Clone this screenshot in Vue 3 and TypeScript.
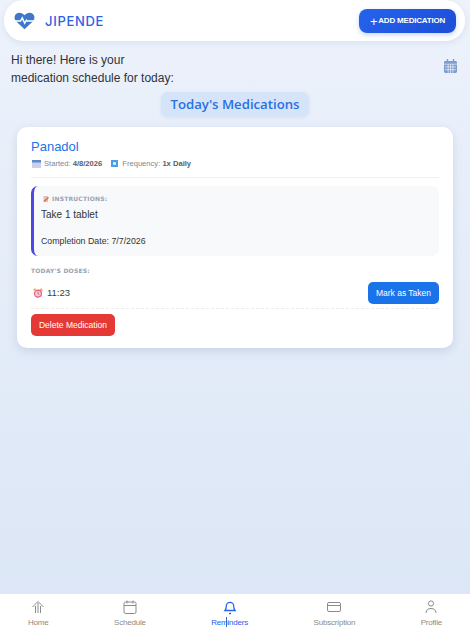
<script setup lang="ts">
interface NavItem { label: string; active?: boolean; icon: string }
const nav: NavItem[] = [
  { label: 'Home', icon: 'home' },
  { label: 'Schedule', icon: 'cal' },
  { label: 'Reminders', icon: 'bell', active: true },
  { label: 'Subscription', icon: 'card' },
  { label: 'Profile', icon: 'user' },
]
</script>

<template>
  <div class="page">
    <header class="topbar">
      <div class="brand">
        <svg class="logo" viewBox="0 0 24 20" width="21" height="18">
          <path fill="#3f78c9" d="M12 19.500 2.600 10.600C-.2 7.800.1 3.600 2.700 1.600 5.400-.4 9.500.2 12 3.300 14.500.2 18.600-.4 21.300 1.600c2.600 2 2.900 6.200.1 9z"/>
          <path fill="none" stroke="#fff" stroke-width="1.700" d="M1 10h6.500l2-3.500 2.700 6 2-3.500 1 1H23"/>
        </svg>
        <span class="brand-name">JIPENDE</span>
      </div>
      <button class="add-btn"><span class="plus">+</span>ADD MEDICATION</button>
    </header>

    <div class="greeting-row">
      <p class="greeting">Hi there! Here is your<br />medication schedule for today:</p>
      <svg class="cal-icon" viewBox="0 0 14 15" width="13" height="14">
        <path fill="#7c9bd1" d="M3 0h1.500v2h5V0H11v2h1.500A1.500 1.500 0 0 1 14 3.500V13.500A1.500 1.500 0 0 1 12.500 15h-11A1.500 1.500 0 0 1 0 13.500V3.500A1.500 1.500 0 0 1 1.500 2H3z"/>
        <path fill="none" stroke="#e8effa" stroke-width=".8" d="M0 5.500h14M1 8.500h12M1 11.500h12M4.500 5.500V15M7 5.500V15M9.500 5.500V15"/>
      </svg>
    </div>

    <div class="title-row"><h2 class="title">Today's Medications</h2></div>

    <section class="card">
      <h3 class="med-name">Panadol</h3>
      <div class="meta">
        <span class="meta-item">
          <svg class="mini" viewBox="0 0 9 8" width="9" height="8"><rect width="9" height="8" fill="#cfcdec"/><rect width="9" height="2.500" fill="#5a8ccc"/></svg>Started: <b>4/8/2026</b>
        </span>
        <span class="meta-item">
          <svg class="mini freq" viewBox="0 0 7 7" width="7" height="7"><rect width="7" height="7" fill="#4a9be8"/><rect x="2" y="2" width="3" height="3" fill="#cfe6fb"/></svg>Frequency: <b>1x Daily</b>
        </span>
      </div>
      <div class="instructions">
        <div class="label">
          <svg class="note" viewBox="0 0 6 6" width="6" height="6"><rect x=".5" width="4.500" height="6" fill="#d9c3c0"/><path d="M1 5.500 5.500 1.500" stroke="#e8663c" stroke-width="1.300"/></svg>INSTRUCTIONS:
        </div>
        <p class="take">Take 1 tablet</p>
        <p class="completion">Completion Date: 7/7/2026</p>
      </div>
      <div class="doses-label">TODAY'S DOSES:</div>
      <div class="dose">
        <span class="dose-time">
          <svg class="alarm" viewBox="0 0 10 10" width="10" height="10">
            <circle cx="5" cy="5.600" r="3.500" fill="#f6c9d6" stroke="#e8557a" stroke-width="1.100"/>
            <path d="M5 3.800v2l1.300.7" fill="none" stroke="#b8475f" stroke-width=".7"/>
            <path d="M.6 2.600 2.600.8M9.400 2.600 7.400.8" stroke="#e9a23a" stroke-width="1.400"/>
          </svg>11:23
        </span>
        <button class="taken-btn">Mark as Taken</button>
      </div>
      <button class="delete-btn">Delete Medication</button>
    </section>

    <nav class="bottom-nav">
      <div v-for="item in nav" :key="item.label" class="nav-item" :class="{ active: item.active }">
        <svg viewBox="0 0 16 16" width="16" height="16" fill="none" stroke="currentColor" stroke-width="1">
          <template v-if="item.icon === 'home'">
            <path d="M2.500 8 8 2.500 13.500 8M5.500 7V14M10.500 7V14M8 4v10"/>
          </template>
          <template v-else-if="item.icon === 'cal'">
            <rect x="2" y="3" width="12" height="11.500" rx="1.500"/><path d="M2 6.500h12M5 1.500v3M11 1.500v3"/>
          </template>
          <template v-else-if="item.icon === 'bell'">
            <path d="M3 11.500c1-1 1.300-2 1.300-4.500a3.700 3.700 0 0 1 7.400 0c0 2.500.3 3.500 1.300 4.500zM7 14.500h2" stroke-width="1.300"/>
          </template>
          <template v-else-if="item.icon === 'card'">
            <rect x="1.500" y="3.500" width="13" height="9" rx="1.500"/><path d="M1.500 6.500h13"/>
          </template>
          <template v-else>
            <circle cx="8" cy="4.500" r="2.600"/><path d="M3 14c0-3 2-4.500 5-4.500s5 1.500 5 4.500"/>
          </template>
        </svg>
        <span class="nav-label">{{ item.label }}<i v-if="item.active" class="cursor"></i></span>
      </div>
    </nav>
  </div>
</template>

<style>
html, body { margin: 0; padding: 0; }
</style>

<style scoped>
.page {
  width: 470px;
  height: 628px;
  box-sizing: border-box;
  display: flex;
  flex-direction: column;
  overflow: hidden;
  background: linear-gradient(180deg, #edf2fb 0%, #dbe6f6 100%);
  font-family: "Liberation Sans", Arial, sans-serif;
  color: #333;
}
.topbar {
  margin: 0 5px 0 4px;
  height: 41px;
  flex: none;
  background: #fff;
  border-radius: 20px;
  box-shadow: 0 2px 6px rgba(60, 90, 150, .10);
  display: flex;
  align-items: center;
  justify-content: space-between;
  padding: 0 9px 0 10px;
}
.brand { display: flex; align-items: center; gap: 10px; }
.brand-name {
  font-family: Inter, sans-serif;
  font-size: 13px;
  font-weight: 500;
  letter-spacing: .7px;
  color: #2c62e6;
}
.add-btn {
  width: 97px;
  height: 24px;
  border: 0;
  border-radius: 8px;
  background: linear-gradient(135deg, #2563eb, #1d4ed8);
  color: #fff;
  font-family: "Liberation Sans", sans-serif;
  font-size: 8px;
  font-weight: 700;
  box-shadow: 0 2px 5px rgba(37, 99, 235, .25);
  padding: 0;
  display: flex;
  align-items: center;
  justify-content: center;
  letter-spacing: -.2px;
}
.plus { font-size: 13px; font-weight: 400; margin-right: 1px; position: relative; top: 1px; }
.greeting-row {
  display: flex;
  justify-content: space-between;
  align-items: flex-start;
  margin-top: 10px;
  padding: 0 13px 0 11px;
}
.greeting { margin: 0; font-size: 12px; line-height: 18px; color: #2f3338; }
.cal-icon { margin-top: 8px; }
.title-row { display: flex; justify-content: center; margin-top: 5px; }
.title {
  margin: 0;
  width: 148px;
  height: 25px;
  text-align: center;
  background: #d6e4fa;
  border-radius: 7px;
  font-family: "Open Sans", sans-serif;
  font-size: 13.200px;
  font-weight: 600;
  line-height: 25px;
  color: #2a70e0;
  box-shadow: 0 1px 4px rgba(80, 120, 200, .12);
  white-space: nowrap;
}
.card {
  margin: 10px 17px 0;
  height: 221px;
  box-sizing: border-box;
  background: #fff;
  border-radius: 10px;
  box-shadow: 0 3px 10px rgba(60, 90, 140, .16);
  padding: 12px 14px 0;
  display: flex;
  flex-direction: column;
  align-items: stretch;
}
.med-name { margin: 0; font-size: 13px; line-height: 16px; font-weight: 400; color: #1a73e8; }
.meta {
  display: flex;
  gap: 9px;
  margin-top: 3px;
  padding-bottom: 8px;
  border-bottom: 1px solid #f1f1f3;
  font-size: 7.600px;
  line-height: 11px;
  color: #7d8794;
}
.meta b { color: #56606e; font-weight: 700; }
.meta-item { display: inline-flex; align-items: center; white-space: pre; }
.mini { margin: 0 3px 0 1px; flex: none; }
.freq { margin: 0 4px 0 0; }
.instructions {
  margin-top: 8px;
  height: 70px;
  box-sizing: border-box;
  background: #f8f9fb;
  border-left: 3px solid #4f46e5;
  border-radius: 7px;
  padding: 8px 0 0 7px;
  color: #333;
}
.label, .doses-label {
  font-family: "DejaVu Sans", sans-serif;
  font-size: 6px;
  font-weight: 700;
  letter-spacing: .2px;
  color: #98a2b3;
  line-height: 9px;
}
.label { display: flex; align-items: center; }
.note { margin: 0 3px 0 2px; flex: none; }
.take { margin: 5px 0 0; font-size: 10px; line-height: 13px; }
.completion { margin: 14px 0 0; font-size: 8.800px; line-height: 12px; }
.doses-label { margin-top: 10px; }
.dose {
  display: flex;
  align-items: flex-start;
  justify-content: space-between;
  margin-top: 7px;
  border-bottom: 1px dashed #ececec;
  padding-bottom: 4px;
}
.dose-time { font-size: 9.500px; line-height: 22px; color: #3c4043; display: inline-flex; align-items: center; }
.alarm { margin: 0 4px 0 2px; flex: none; }
.taken-btn {
  width: 71px;
  height: 22px;
  border: 0;
  border-radius: 5px;
  background: #1a73e8;
  color: #fff;
  font-family: "Liberation Sans", sans-serif;
  font-size: 8.500px;
  font-weight: 400;
  padding: 0;
}
.delete-btn {
  margin-top: 5px;
  align-self: flex-start;
  width: 84px;
  height: 22px;
  border: 0;
  border-radius: 5px;
  background: #e53935;
  color: #fff;
  font-family: "Liberation Sans", sans-serif;
  font-size: 8.500px;
  padding: 0;
}
.bottom-nav {
  margin-top: auto;
  height: 34px;
  flex: none;
  box-sizing: border-box;
  background: #fff;
  display: flex;
  justify-content: space-between;
  align-items: flex-start;
  padding: 0 28px;
}
.nav-item {
  display: flex;
  flex-direction: column;
  align-items: center;
  color: #8b8b8b;
  font-size: 8px;
  letter-spacing: -.2px;
  line-height: 10px;
  padding-top: 5px;
  gap: 3px;
}
.nav-label { position: relative; color: #8f8a84; }
.nav-item.active { color: #2563eb; }
.nav-item.active .nav-label { color: #2563eb; }
.cursor {
  position: absolute;
  left: 15px;
  top: -1px;
  width: 1px;
  height: 10px;
  background: #2b6fc4;
}
</style>
